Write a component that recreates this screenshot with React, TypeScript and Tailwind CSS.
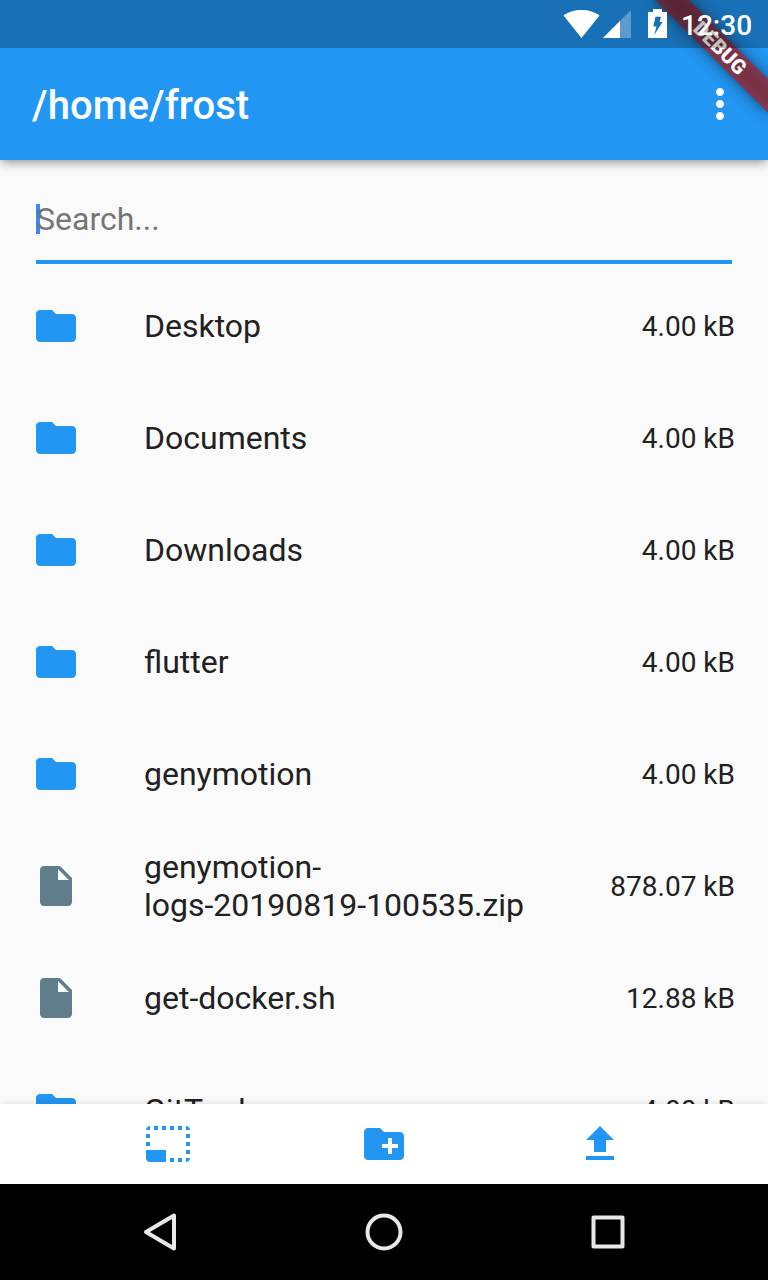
import type { ReactNode } from 'react';

type Entry = { name: string; size: string; kind: 'folder' | 'file' };

const entries: Entry[] = [
  { name: 'Desktop', size: '4.00 kB', kind: 'folder' },
  { name: 'Documents', size: '4.00 kB', kind: 'folder' },
  { name: 'Downloads', size: '4.00 kB', kind: 'folder' },
  { name: 'flutter', size: '4.00 kB', kind: 'folder' },
  { name: 'genymotion', size: '4.00 kB', kind: 'folder' },
  { name: 'genymotion-\nlogs-20190819-100535.zip', size: '878.07 kB', kind: 'file' },
  { name: 'get-docker.sh', size: '12.88 kB', kind: 'file' },
  { name: 'GitTool', size: '4.00 kB', kind: 'folder' },
];

const paths = {
  folder: 'M10 4H4c-1.1 0-1.99.9-1.99 2L2 18c0 1.1.9 2 2 2h16c1.1 0 2-.9 2-2V8c0-1.1-.9-2-2-2h-8l-2-2z',
  file: 'M6 2c-1.1 0-1.99.9-1.99 2L4 20c0 1.1.89 2 1.99 2H18c1.1 0 2-.9 2-2V8l-6-6H6zm7 7V3.5L18.5 9H13z',
  more: 'M12 8c1.1 0 2-.9 2-2s-.9-2-2-2-2 .9-2 2 .9 2 2 2zm0 2c-1.1 0-2 .9-2 2s.9 2 2 2 2-.9 2-2-.9-2-2-2zm0 6c-1.1 0-2 .9-2 2s.9 2 2 2 2-.9 2-2-.9-2-2-2z',
  select:
    'M23 15h-2v2h2v-2zm0-4h-2v2h2v-2zm0 8h-2v2c1 0 2-1 2-2zM15 3h-2v2h2V3zm8 4h-2v2h2V7zm-2-4v2h2c0-1-1-2-2-2zM3 21h8v-6H1v4c0 1.1.9 2 2 2zM3 7H1v2h2V7zm12 12h-2v2h2v-2zm4-16h-2v2h2V3zm0 16h-2v2h2v-2zM3 3C2 3 1 4 1 5h2V3zm0 8H1v2h2v-2zm8-8H9v2h2V3zM7 3H5v2h2V3z',
  newFolder:
    'M20 6h-8l-2-2H4c-1.11 0-1.99.89-1.99 2L2 18c0 1.11.89 2 2 2h16c1.11 0 2-.89 2-2V8c0-1.11-.89-2-2-2zm-1 8h-3v3h-2v-3h-3v-2h3V9h2v3h3v2z',
  upload: 'M9 16h6v-6h4l-7-7-7 7h4v6zm-4 2h14v2H5v-2z',
};

function Icon({ d, className }: { d: string; className: string }) {
  return (
    <svg viewBox="0 0 24 24" fill="currentColor" className={`size-12 shrink-0 ${className}`}>
      <path d={d} />
    </svg>
  );
}

function StatusBar() {
  return (
    <div className="absolute inset-x-0 top-0 z-20 flex h-12 items-center justify-end bg-black/25 pr-[17px] text-white">
      <svg width="120" height="48" viewBox="560 0 120 48" className="mr-px shrink-0" fill="currentColor">
        <path d="M581.5 38 563.5 15.5C568 12 574.5 10 581.5 10S595 12 599.5 15.5Z" />
        <path d="M631 10v28h-28Z" fillOpacity="0.3" />
        <path d="M620 21v17h-17Z" />
        <path
          fillRule="evenodd"
          d="M653 9h9v3h5v26h-19V12h5ZM655.5 16.8 653.3 26.5h3.2L654.2 35 662.5 22h-3L661 16.8Z"
        />
      </svg>
      <span className="w-[70px] pt-1 text-right text-[28px] leading-11 font-medium whitespace-nowrap">12:30</span>
    </div>
  );
}

function DebugBanner() {
  return (
    <div className="pointer-events-none absolute top-0 right-0 z-10 size-60 overflow-hidden">
      <div className="absolute top-9 left-28 h-6 w-40 rotate-45 bg-black/50 blur-[7.5px]" />
      <div className="absolute top-9 left-28 flex h-6 w-40 rotate-45 items-center justify-center bg-[#b71c1c]/63 text-[20.4px] leading-none font-black text-white">
        DEBUG
      </div>
    </div>
  );
}

function Row({ entry }: { entry: Entry }) {
  return (
    <li className="flex h-28 shrink-0 items-center pr-[33px] pl-8">
      <Icon d={paths[entry.kind]} className={entry.kind === 'folder' ? 'text-[#2196f3]' : 'text-[#607d8b]'} />
      <span className="mr-8 ml-16 min-w-0 flex-1 text-[32px] leading-[38px] whitespace-pre-line">{entry.name}</span>
      <span className="pt-0.5 text-[28px] leading-[42px] whitespace-nowrap">{entry.size}</span>
    </li>
  );
}

function Action({ children }: { children: ReactNode }) {
  return <button className="flex size-12 items-center justify-center text-[#2196f3]">{children}</button>;
}

export default function App() {
  return (
    <div className="relative flex h-[1280px] w-[768px] flex-col overflow-hidden bg-[#fafafa] font-['Roboto',sans-serif] text-[#212121]">
      <StatusBar />
      <DebugBanner />
      <header className="z-1 flex h-40 shrink-0 items-center justify-between bg-[#2196f3] pt-12 pr-6 pl-8 text-white shadow-[0_4px_8px_-2px_rgba(0,0,0,0.25),0_4px_12px_-1px_rgba(0,0,0,0.2)]">
        <h1 className="pt-1 text-[40px] leading-[48px] font-medium tracking-[0.04px]">/home/frost</h1>
        <Icon d={paths.more} className="text-white" />
      </header>
      <main className="flex min-h-0 flex-1 flex-col overflow-hidden">
        <div className="mx-9 mt-4 mb-[6px] flex h-[88px] shrink-0 items-center border-b-4 border-[#2196f3] pt-0.5">
          <span className="h-[30px] w-1 bg-[#4285f4]" />
          <span className="-ml-1 text-[32px] leading-[38px] text-[#757575]">Search...</span>
        </div>
        <ul className="flex flex-col">
          {entries.map((entry) => (
            <Row key={entry.name} entry={entry} />
          ))}
        </ul>
      </main>
      <footer className="z-1 flex h-20 shrink-0 items-center justify-between bg-white px-36 shadow-[0_0_8px_rgba(0,0,0,0.12)]">
        <Action>
          <Icon d={paths.select} className="" />
        </Action>
        <Action>
          <Icon d={paths.newFolder} className="" />
        </Action>
        <Action>
          <Icon d={paths.upload} className="" />
        </Action>
      </footer>
      <nav className="z-2 flex h-24 shrink-0 items-center justify-between bg-black px-34">
        <svg viewBox="0 0 48 48" className="size-12" fill="none" stroke="#e8e8e8" strokeWidth="4" strokeLinejoin="round">
          <path d="M38 7.5v33L10 24Z" />
        </svg>
        <svg viewBox="0 0 48 48" className="size-12" fill="none" stroke="#e8e8e8" strokeWidth="4">
          <circle cx="24" cy="24" r="16.5" />
        </svg>
        <svg viewBox="0 0 48 48" className="size-12" fill="none" stroke="#e8e8e8" strokeWidth="4" strokeLinejoin="round">
          <rect x="9.5" y="9.5" width="29" height="29" />
        </svg>
      </nav>
    </div>
  );
}
